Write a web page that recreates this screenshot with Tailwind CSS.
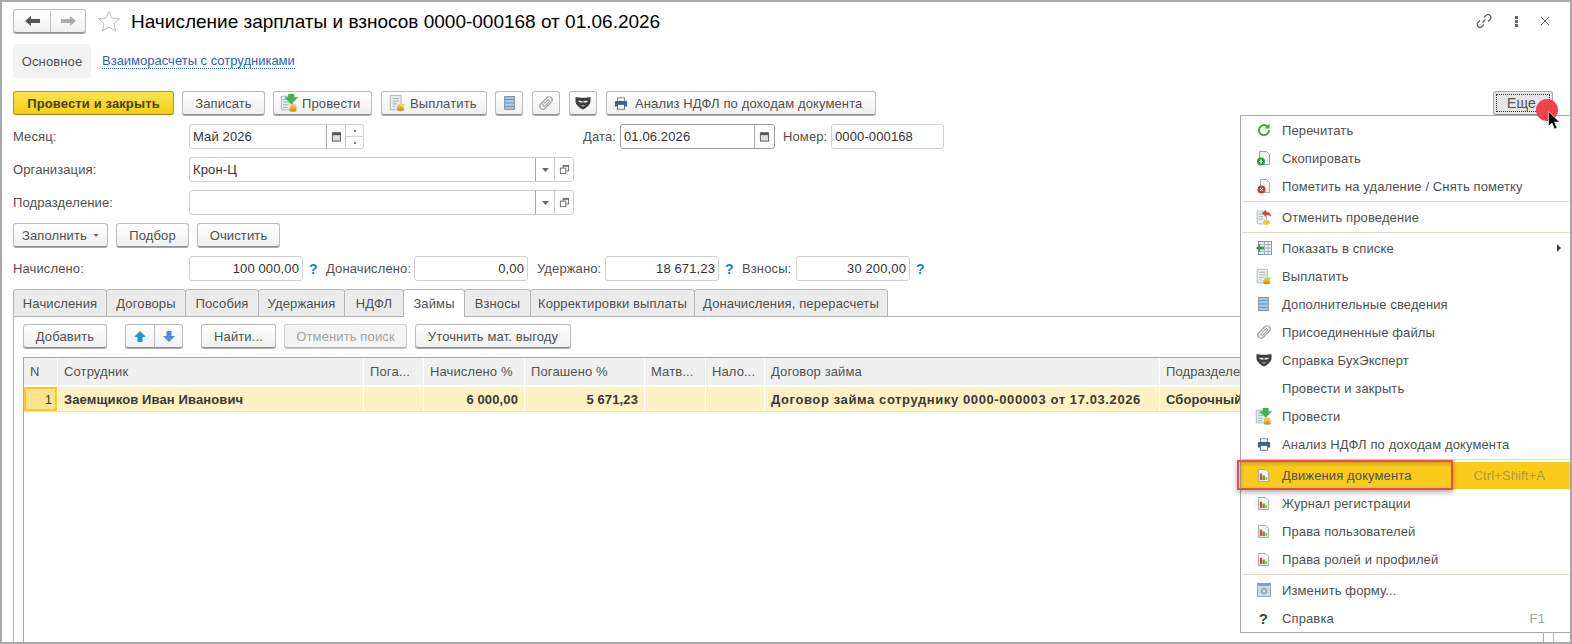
<!DOCTYPE html>
<html lang="ru">

<head>
  <meta charset="UTF-8">
  <title>Начисление зарплаты и взносов</title>
  <script src="https://cdn.jsdelivr.net/npm/@tailwindcss/browser@4"></script>
</head>

<body class="bg-white">

  <!-- Shared icons -->
  <svg width="0" height="0" class="absolute">
    <defs>
      <symbol id="i-cal" viewBox="0 0 12 12">
        <rect x="1.5" y="2" width="9" height="9" fill="#ddd" stroke="#555"/>
        <rect x="1.5" y="2" width="9" height="2.5" fill="#555"/>
        <path d="M3.5 1v2M8.500 1v2" stroke="#555"/>
      </symbol>
      <symbol id="i-open" viewBox="0 0 12 12">
        <rect x="4.500" y="1.500" width="6" height="6" fill="#fff" stroke="#666"/>
        <path d="M4.500 1.500h6v1.500h-6z" fill="#666"/>
        <rect x="1.500" y="4.500" width="6" height="6" fill="#fff" stroke="#666"/>
      </symbol>
      <symbol id="i-post" viewBox="0 0 20 20">
        <path d="M1.500 2.500h12v15h-12z" fill="#e8eef4" stroke="#9fb0c0"/>
        <path d="M3.500 6h5M3.500 9h6M3.500 12h6M3.500 15h5" stroke="#9aa8b5"/>
        <path d="M9.500 0h6v4h4l-7 7-7-7h4z" fill="#3fb54a" stroke="#2a8f38" stroke-width=".5"/>
        <ellipse cx="14.500" cy="13" rx="4" ry="1.800" fill="#f4cd45"/>
        <ellipse cx="14.500" cy="15.500" rx="4" ry="1.800" fill="#e8b429"/>
        <ellipse cx="14.500" cy="18" rx="4" ry="1.800" fill="#cf9a1e"/>
      </symbol>
      <symbol id="i-pay" viewBox="0 0 20 20">
        <path d="M2.500 1.500h12v16h-12z" fill="#e8eef4" stroke="#9fb0c0"/>
        <path d="M5 5h7M5 8h7M5 11h5M5 14h3" stroke="#9aa8b5"/>
        <ellipse cx="14.500" cy="12.500" rx="4" ry="1.800" fill="#f4cd45"/>
        <ellipse cx="13.500" cy="15" rx="4" ry="1.800" fill="#e8b429"/>
        <ellipse cx="14" cy="17.300" rx="4" ry="1.800" fill="#cf9a1e"/>
      </symbol>
      <symbol id="i-list" viewBox="0 0 12 16">
        <rect x=".5" y=".5" width="11" height="15" fill="#a9c6e0" stroke="#6b8fae"/>
        <path d="M.5 4h11M.5 8h11M.5 12h11" stroke="#6b8fae"/>
      </symbol>
      <symbol id="i-clip" viewBox="0 0 16 16">
        <g transform="rotate(45 8 8)" fill="none" stroke="#a3a3a3">
          <rect x="4.500" y="-.5" width="7" height="17" rx="3.500" stroke-width="1.500"/>
          <rect x="7" y="3" width="2.500" height="9.500" rx="1.250" stroke-width="1.200"/>
        </g>
      </symbol>
      <symbol id="i-mask" viewBox="0 0 16 14">
        <path d="M.5 1c3 1 12 1 15 0v4.500c0 3-4.500 7-7.500 8-3-1-7.500-5-7.500-8z" fill="#3e3e3e"/>
        <path d="M3 5c2-.5 3.500-.5 5 .8 1.500-1.300 3-1.300 5-.8-1 1.500-3.500 2-5 1-1.500 1-4 .5-5-1z" fill="#fff"/>
        <path d="M5.500 9h5L8 11z" fill="#999"/>
      </symbol>
      <symbol id="i-print" viewBox="0 0 16 14">
        <rect x="4" y="0.500" width="8" height="4" fill="#fff" stroke="#5d7f9f"/>
        <path d="M1 5.500q0-1.500 1.500-1.500h11q1.500 0 1.500 1.500v5h-14z" fill="#38658f"/>
        <rect x="4" y="8" width="8" height="5.500" fill="#fff" stroke="#38658f"/>
      </symbol>
      <symbol id="i-chart" viewBox="0 0 14 16">
        <path d="M1.500 1.500h8l3 3v10h-11z" fill="#f6f6f6" stroke="#9aa4ad"/>
        <rect x="3" y="6" width="2.500" height="7" fill="#d9433b"/>
        <rect x="6" y="8" width="2.500" height="5" fill="#3fa648"/>
        <rect x="9" y="9.500" width="2" height="3.500" fill="#e3a72b"/>
      </symbol>
    </defs>
  </svg>

  <div class="relative w-[1572px] h-[644px] overflow-hidden border-2 border-[#a9a9a9] bg-white pl-[11px] pt-[7px] flex flex-col font-['Liberation_Sans',Arial,sans-serif] text-[13px] leading-none tracking-[0.12px] text-[#505050]">

    <!-- Title bar -->
    <div class="h-[24px] flex items-center shrink-0">
      <div class="w-[73px] h-[24px] flex rounded-[3px] border border-[#bbb] border-b-[#8f8f8f] shadow-[0_1px_0_#aaa] bg-linear-to-b from-white to-[#f0f0f0]">
        <div class="w-[37px] flex items-center justify-center border-r border-[#c4c4c4]">
          <svg width="15" height="10" viewBox="0 0 15 10"><path d="M0 5l6-5v3h9v4H6v3z" fill="#555"/></svg>
        </div>
        <div class="flex-1 flex items-center justify-center">
          <svg width="15" height="10" viewBox="0 0 15 10"><path d="M15 5L9 0v3H0v4h9v3z" fill="#adadad"/></svg>
        </div>
      </div>
      <svg class="ml-[11px]" width="24" height="24" viewBox="0 0 24 24"><path d="M12 2l3 7 7.500.7-5.600 5 1.700 7.300L12 18.200 5.400 22l1.700-7.300-5.600-5L9 9z" fill="#fff" stroke="#bdbdbd"/></svg>
      <h1 class="ml-[10px] text-[19px] tracking-normal text-black font-normal whitespace-nowrap">Начисление зарплаты и взносов 0000-000168 от 01.06.2026</h1>
      <div class="ml-auto flex items-center pr-[20px]">
        <svg width="18" height="18" viewBox="0 0 18 18" fill="none" stroke="#666" stroke-width="1.200"><path d="M7.500 10.500l3-3"/><path d="M9 5.500l2-2a2.800 2.800 0 0 1 4 4l-2 2"/><path d="M9 12.500l-2 2a2.800 2.800 0 0 1-4-4l2-2"/></svg>
        <div class="ml-[22px] flex flex-col gap-[1px]">
          <span class="w-[3px] h-[3px] bg-[#666]"></span>
          <span class="w-[3px] h-[3px] bg-[#666]"></span>
          <span class="w-[3px] h-[3px] bg-[#666]"></span>
        </div>
        <svg class="ml-[22px]" width="10" height="10" viewBox="0 0 10 10" stroke="#666"><path d="M1 1l8 8M9 1l-8 8"/></svg>
      </div>
    </div>

    <!-- Form sections -->
    <div class="mt-[11px] h-[34px] flex items-center shrink-0">
      <div class="w-[78px] h-[34px] rounded-[3px] bg-[#f2f2f2] flex items-center justify-center">Основное</div>
      <a href="#" class="ml-[11px] tracking-normal text-[#2a5fbf] border-b border-dotted border-[#2a5fbf] pb-[1px]">Взаиморасчеты с сотрудниками</a>
    </div>

    <!-- Command bar -->
    <div class="mt-[13px] h-[24px] flex shrink-0">
      <button class="w-[161px] h-[24px] rounded-[3px] border border-[#b39b22] border-b-[#9c861a] bg-linear-to-b from-[#fbe44c] to-[#f5cf00] font-bold text-[#4a4000]">Провести и закрыть</button>
      <button class="ml-[8px] w-[83px] h-[24px] rounded-[3px] border border-[#bbb] border-b-[#8f8f8f] shadow-[0_1px_0_#aaa] bg-linear-to-b from-white to-[#f0f0f0]">Записать</button>
      <button class="ml-[8px] w-[99px] h-[24px] rounded-[3px] border border-[#bbb] border-b-[#8f8f8f] shadow-[0_1px_0_#aaa] bg-linear-to-b from-white to-[#f0f0f0] flex items-center pl-[6px]">
        <svg width="18" height="18"><use href="#i-post"/></svg><span class="ml-[4px]">Провести</span>
      </button>
      <button class="ml-[9px] w-[106px] h-[24px] rounded-[3px] border border-[#bbb] border-b-[#8f8f8f] shadow-[0_1px_0_#aaa] bg-linear-to-b from-white to-[#f0f0f0] flex items-center pl-[6px]">
        <svg width="18" height="18"><use href="#i-pay"/></svg><span class="ml-[4px]">Выплатить</span>
      </button>
      <button class="ml-[8px] w-[28px] h-[24px] rounded-[3px] border border-[#bbb] border-b-[#8f8f8f] shadow-[0_1px_0_#aaa] bg-linear-to-b from-white to-[#f0f0f0] flex items-center justify-center">
        <svg width="11" height="14"><use href="#i-list"/></svg>
      </button>
      <button class="ml-[9px] w-[28px] h-[24px] rounded-[3px] border border-[#bbb] border-b-[#8f8f8f] shadow-[0_1px_0_#aaa] bg-linear-to-b from-white to-[#f0f0f0] flex items-center justify-center">
        <svg width="14" height="14"><use href="#i-clip"/></svg>
      </button>
      <button class="ml-[9px] w-[28px] h-[24px] rounded-[3px] border border-[#bbb] border-b-[#8f8f8f] shadow-[0_1px_0_#aaa] bg-linear-to-b from-white to-[#f0f0f0] flex items-center justify-center">
        <svg width="16" height="14"><use href="#i-mask"/></svg>
      </button>
      <button class="ml-[9px] w-[270px] h-[24px] rounded-[3px] border border-[#bbb] border-b-[#8f8f8f] shadow-[0_1px_0_#aaa] bg-linear-to-b from-white to-[#f0f0f0] flex items-center pl-[7px]">
        <svg width="14" height="13"><use href="#i-print"/></svg><span class="ml-[7px]">Анализ НДФЛ по доходам документа</span>
      </button>
    </div>

    <!-- Month, date, number -->
    <div class="mt-[9px] h-[25px] flex items-center shrink-0">
      <span class="w-[176px]">Месяц:</span>
      <div class="w-[175px] h-[25px] flex rounded-[3px] border border-[#d0d0d0]">
        <span class="w-[136px] flex items-center pl-[3px] text-[#333]">Май 2026</span>
        <span class="w-[19px] flex items-center justify-center border-l border-[#a9a9a9]"><svg width="11" height="11"><use href="#i-cal"/></svg></span>
        <span class="flex-1 flex flex-col border-l border-[#c9c9c9]">
          <span class="flex-1 flex items-center justify-center border-b border-[#d0d0d0]"><span class="w-[2px] h-[2px] bg-[#777]"></span></span>
          <span class="flex-1 flex items-center justify-center"><span class="w-[2px] h-[2px] bg-[#777]"></span></span>
        </span>
      </div>
      <span class="ml-[219px] w-[37px]">Дата:</span>
      <div class="w-[155px] h-[25px] flex rounded-[3px] border border-[#9a9a9a]">
        <span class="flex-1 flex items-center pl-[3px] text-[#333]">01.06.2026</span>
        <span class="w-[20px] flex items-center justify-center border-l border-[#a9a9a9]"><svg width="11" height="11"><use href="#i-cal"/></svg></span>
      </div>
      <span class="ml-[8px] w-[48px]">Номер:</span>
      <div class="w-[113px] h-[25px] flex items-center pl-[3px] rounded-[3px] border border-[#d0d0d0] text-[#333]">0000-000168</div>
    </div>

    <!-- Organisation -->
    <div class="mt-[8px] h-[25px] flex items-center shrink-0">
      <span class="w-[176px]">Организация:</span>
      <div class="w-[385px] h-[25px] flex rounded-[3px] border border-[#d0d0d0]">
        <span class="flex-1 flex items-center pl-[3px] text-[#333]">Крон-Ц</span>
        <span class="w-[19px] flex items-center justify-center border-l border-[#a9a9a9]"><svg width="7" height="4" viewBox="0 0 7 4"><path d="M0 0h7L3.500 4z" fill="#666"/></svg></span>
        <span class="w-[19px] flex items-center justify-center border-l border-[#c9c9c9]"><svg width="11" height="11"><use href="#i-open"/></svg></span>
      </div>
    </div>

    <!-- Department -->
    <div class="mt-[8px] h-[25px] flex items-center shrink-0">
      <span class="w-[176px]">Подразделение:</span>
      <div class="w-[385px] h-[25px] flex rounded-[3px] border border-[#d0d0d0]">
        <span class="flex-1"></span>
        <span class="w-[19px] flex items-center justify-center border-l border-[#a9a9a9]"><svg width="7" height="4" viewBox="0 0 7 4"><path d="M0 0h7L3.500 4z" fill="#666"/></svg></span>
        <span class="w-[19px] flex items-center justify-center border-l border-[#c9c9c9]"><svg width="11" height="11"><use href="#i-open"/></svg></span>
      </div>
    </div>

    <!-- Fill buttons -->
    <div class="mt-[8px] h-[24px] flex shrink-0">
      <button class="w-[95px] h-[24px] rounded-[3px] border border-[#bbb] border-b-[#8f8f8f] shadow-[0_1px_0_#aaa] bg-linear-to-b from-white to-[#f0f0f0] flex items-center justify-center gap-[6px]">Заполнить<svg width="6" height="3" viewBox="0 0 7 4"><path d="M0 0h7L3.500 4z" fill="#666"/></svg></button>
      <button class="ml-[8px] w-[73px] h-[24px] rounded-[3px] border border-[#bbb] border-b-[#8f8f8f] shadow-[0_1px_0_#aaa] bg-linear-to-b from-white to-[#f0f0f0]">Подбор</button>
      <button class="ml-[8px] w-[83px] h-[24px] rounded-[3px] border border-[#bbb] border-b-[#8f8f8f] shadow-[0_1px_0_#aaa] bg-linear-to-b from-white to-[#f0f0f0]">Очистить</button>
    </div>

    <!-- Totals -->
    <div class="mt-[9px] h-[25px] flex items-center shrink-0">
      <span class="w-[176px]">Начислено:</span>
      <div class="w-[114px] h-[25px] flex items-center justify-end pr-[3px] rounded-[3px] border border-[#d0d0d0] text-[#333]">100 000,00</div>
      <span class="w-[23px] pl-[6px] font-bold text-[14px] text-[#1a7fc4]">?</span>
      <span class="w-[88px]">Доначислено:</span>
      <div class="w-[114px] h-[25px] flex items-center justify-end pr-[3px] rounded-[3px] border border-[#d0d0d0] text-[#333]">0,00</div>
      <span class="ml-[9px] w-[68px]">Удержано:</span>
      <div class="w-[114px] h-[25px] flex items-center justify-end pr-[3px] rounded-[3px] border border-[#d0d0d0] text-[#333]">18 671,23</div>
      <span class="w-[23px] pl-[6px] font-bold text-[14px] text-[#1a7fc4]">?</span>
      <span class="w-[54px]">Взносы:</span>
      <div class="w-[114px] h-[25px] flex items-center justify-end pr-[3px] rounded-[3px] border border-[#d0d0d0] text-[#333]">30 200,00</div>
      <span class="pl-[6px] font-bold text-[14px] text-[#1a7fc4]">?</span>
    </div>

    <!-- Tabs -->
    <div class="mt-[8px] h-[27px] flex shrink-0 relative z-10">
      <div class="w-[94px] h-[28px] flex items-center justify-center bg-[#ebebeb] border border-[#b5b5b5] rounded-t-[3px]">Начисления</div>
      <div class="w-[80px] h-[28px] -ml-px flex items-center justify-center bg-[#ebebeb] border border-[#b5b5b5] rounded-t-[3px]">Договоры</div>
      <div class="w-[74px] h-[28px] -ml-px flex items-center justify-center bg-[#ebebeb] border border-[#b5b5b5] rounded-t-[3px]">Пособия</div>
      <div class="w-[87px] h-[28px] -ml-px flex items-center justify-center bg-[#ebebeb] border border-[#b5b5b5] rounded-t-[3px]">Удержания</div>
      <div class="w-[60px] h-[28px] -ml-px flex items-center justify-center bg-[#ebebeb] border border-[#b5b5b5] rounded-t-[3px]">НДФЛ</div>
      <div class="w-[62px] h-[28px] -ml-px flex items-center justify-center bg-white border border-b-0 border-[#b5b5b5] rounded-t-[3px]">Займы</div>
      <div class="w-[67px] h-[28px] -ml-px flex items-center justify-center bg-[#ebebeb] border border-[#b5b5b5] rounded-t-[3px]">Взносы</div>
      <div class="w-[165px] h-[28px] -ml-px flex items-center justify-center bg-[#ebebeb] border border-[#b5b5b5] rounded-t-[3px]">Корректировки выплаты</div>
      <div class="w-[194px] h-[28px] -ml-px flex items-center justify-center bg-[#ebebeb] border border-[#b5b5b5] rounded-t-[3px]">Доначисления, перерасчеты</div>
    </div>

    <!-- Tab page -->
    <div class="w-[1541px] flex-1 border border-b-0 border-[#b5b5b5] pl-[9px] pr-[9px] pt-[7px] flex flex-col min-h-0">
      <div class="h-[24px] flex shrink-0">
        <button class="w-[84px] h-[24px] rounded-[3px] border border-[#bbb] border-b-[#8f8f8f] shadow-[0_1px_0_#aaa] bg-linear-to-b from-white to-[#f0f0f0]">Добавить</button>
        <div class="ml-[18px] w-[58px] h-[24px] flex rounded-[3px] border border-[#bbb] border-b-[#8f8f8f] shadow-[0_1px_0_#aaa] bg-linear-to-b from-white to-[#f0f0f0]">
          <span class="w-[29px] flex items-center justify-center border-r border-[#bbb]"><svg width="12" height="11" viewBox="0 0 12 11"><path d="M6 0l6 6H8.500v5h-5V6H0z" fill="#2b8fd6"/></svg></span>
          <span class="flex-1 flex items-center justify-center"><svg width="12" height="11" viewBox="0 0 12 11"><path d="M6 11l6-6H8.500V0h-5v5H0z" fill="#4d8fcf"/></svg></span>
        </div>
        <button class="ml-[18px] w-[75px] h-[24px] rounded-[3px] border border-[#bbb] border-b-[#8f8f8f] shadow-[0_1px_0_#aaa] bg-linear-to-b from-white to-[#f0f0f0]">Найти...</button>
        <button class="ml-[8px] w-[123px] h-[24px] rounded-[3px] border border-[#d0d0d0] border-b-[#b5b5b5] shadow-[0_1px_0_#ccc] bg-[#f4f4f4] text-[#a3a3a3]">Отменить поиск</button>
        <button class="ml-[8px] w-[156px] h-[24px] rounded-[3px] border border-[#bbb] border-b-[#8f8f8f] shadow-[0_1px_0_#aaa] bg-linear-to-b from-white to-[#f0f0f0]">Уточнить мат. выгоду</button>
      </div>

      <!-- Loans table -->
      <div class="mt-[9px] flex-1 border-x border-t border-[#a9a9a9]">
        <div class="h-[27px] grid grid-cols-[33px_305px_59px_100px_119px_60px_58px_394px_1fr] gap-x-px">
          <div class="bg-[#f0f0f0] flex items-center pl-[6px]">N</div>
          <div class="bg-[#f0f0f0] flex items-center pl-[6px]">Сотрудник</div>
          <div class="bg-[#f0f0f0] flex items-center pl-[6px]">Пога...</div>
          <div class="bg-[#f0f0f0] flex items-center pl-[6px]">Начислено %</div>
          <div class="bg-[#f0f0f0] flex items-center pl-[6px]">Погашено %</div>
          <div class="bg-[#f0f0f0] flex items-center pl-[6px]">Матв...</div>
          <div class="bg-[#f0f0f0] flex items-center pl-[6px]">Нало...</div>
          <div class="bg-[#f0f0f0] flex items-center pl-[6px]">Договор займа</div>
          <div class="bg-[#f0f0f0] flex items-center pl-[6px]">Подразделение</div>
        </div>
        <div class="mt-[2px] h-[25px] border-b border-[#e2e2e2] grid grid-cols-[33px_305px_59px_100px_119px_60px_58px_394px_1fr] gap-x-px font-bold text-[#3a3a3a]">
          <div class="bg-[#fde38f] border-2 border-[#f9c91f] flex items-center justify-end pr-[3px] font-normal">1</div>
          <div class="bg-[#fef1c2] flex items-center pl-[6px]">Заемщиков Иван Иванович</div>
          <div class="bg-[#fef1c2]"></div>
          <div class="bg-[#fef1c2] flex items-center justify-end pr-[6px]">6 000,00</div>
          <div class="bg-[#fef1c2] flex items-center justify-end pr-[6px]">5 671,23</div>
          <div class="bg-[#fef1c2]"></div>
          <div class="bg-[#fef1c2]"></div>
          <div class="bg-[#fef1c2] flex items-center pl-[6px] whitespace-nowrap tracking-[0.6px]">Договор займа сотруднику 0000-000003 от 17.03.2026</div>
          <div class="bg-[#fef1c2] flex items-center pl-[6px]">Сборочный цех</div>
        </div>
      </div>
    </div>

    <!-- Еще button -->
    <div class="absolute left-[1491px] top-[89px] w-[60px] h-[24px] rounded-[3px] border border-[#aaa] border-b-[#8a8a8a] bg-[#e6e6e6] p-[2px]">
      <div class="w-full h-full border border-dotted border-[#333] flex items-center pl-[10px] text-[14px]">Еще</div>
    </div>

    <!-- Popup menu -->
    <div class="absolute left-[1238px] top-[113px] right-0 h-[518px] bg-white border-l border-y border-[#a9a9a9] flex flex-col">
      <div class="h-[28px] flex items-center shrink-0">
        <span class="w-[41px] flex justify-center pl-[4px]"><svg width="14" height="14" viewBox="0 0 14 14" fill="none"><path d="M12 7a5 5 0 1 1-1.500-3.500" stroke="#45a845" stroke-width="2"/><path d="M12.500 .5v5h-5z" fill="#45a845"/></svg></span>Перечитать
      </div>
      <div class="h-[28px] flex items-center shrink-0">
        <span class="w-[41px] flex justify-center pl-[4px]"><svg width="16" height="16" viewBox="0 0 16 16"><path d="M3.500 1.500h7l3 3v10h-10z" fill="#f0f2f4" stroke="#8fa3b5"/><circle cx="5" cy="11.500" r="4" fill="#2c9e45"/><path d="M3 11.500h4M5 9.500v4" stroke="#fff" stroke-width="1.200"/></svg></span>Скопировать
      </div>
      <div class="h-[28px] flex items-center shrink-0">
        <span class="w-[41px] flex justify-center pl-[4px]"><svg width="16" height="16" viewBox="0 0 16 16"><path d="M4.500 1.500h6l3 3v10h-9z" fill="#f0f2f4" stroke="#9fb0c0"/><circle cx="5.500" cy="11.500" r="4" fill="#d8323a"/><path d="M4 10l3 3M7 10l-3 3" stroke="#fff"/></svg></span>Пометить на удаление / Снять пометку
      </div>
      <div class="h-[3px] shrink-0 ml-[1px] flex items-center"><div class="w-full h-px bg-[#dcd8ca]"></div></div>
      <div class="h-[28px] flex items-center shrink-0">
        <span class="w-[41px] flex justify-center pl-[4px]"><svg width="17" height="17" viewBox="0 0 20 20"><path d="M2.500 2.500h11v15h-11z" fill="#e8eef4" stroke="#9fb0c0"/><path d="M4.500 6h6M4.500 9h5M4.500 12h5" stroke="#9aa8b5"/><path d="M8 5l5-4v2.500c4 0 6 2 6 6-1.500-2-3-2.500-6-2.500V9.500z" fill="#d9433b"/><ellipse cx="13.500" cy="15.500" rx="4" ry="3" fill="#f1c534"/></svg></span>Отменить проведение
      </div>
      <div class="h-[3px] shrink-0 ml-[1px] flex items-center"><div class="w-full h-px bg-[#dcd8ca]"></div></div>
      <div class="h-[28px] flex items-center shrink-0 relative">
        <span class="w-[41px] flex justify-center pl-[4px]"><svg width="16" height="14" viewBox="0 0 16 14"><rect x="2.500" y=".5" width="13" height="13" fill="#f2f6fa" stroke="#7f97ae"/><path d="M2.500 3.500h13M8.500 .5v13M12 .5v13M2.500 7h13M2.500 10.500h13" stroke="#9db0c2"/><path d="M0 7l4-3.500v2h4v3H4v2z" fill="#2c9e45"/></svg></span>Показать в списке
        <svg class="absolute right-[9px] top-[10px]" width="4" height="8" viewBox="0 0 4 8"><path d="M0 0l4 4-4 4z" fill="#444"/></svg>
      </div>
      <div class="h-[28px] flex items-center shrink-0">
        <span class="w-[41px] flex justify-center pl-[4px]"><svg width="17" height="17"><use href="#i-pay"/></svg></span>Выплатить
      </div>
      <div class="h-[28px] flex items-center shrink-0">
        <span class="w-[41px] flex justify-center pl-[4px]"><svg width="11" height="14"><use href="#i-list"/></svg></span>Дополнительные сведения
      </div>
      <div class="h-[28px] flex items-center shrink-0">
        <span class="w-[41px] flex justify-center pl-[4px]"><svg width="14" height="14"><use href="#i-clip"/></svg></span>Присоединенные файлы
      </div>
      <div class="h-[28px] flex items-center shrink-0">
        <span class="w-[41px] flex justify-center pl-[4px]"><svg width="16" height="14"><use href="#i-mask"/></svg></span>Справка БухЭксперт
      </div>
      <div class="h-[28px] flex items-center shrink-0">
        <span class="w-[41px]"></span>Провести и закрыть
      </div>
      <div class="h-[28px] flex items-center shrink-0">
        <span class="w-[41px] flex justify-center pl-[4px]"><svg width="17" height="17"><use href="#i-post"/></svg></span>Провести
      </div>
      <div class="h-[28px] flex items-center shrink-0">
        <span class="w-[41px] flex justify-center pl-[4px]"><svg width="14" height="13"><use href="#i-print"/></svg></span>Анализ НДФЛ по доходам документа
      </div>
      <div class="h-[4px] shrink-0 ml-[1px] flex items-start pt-px"><div class="w-full h-px bg-[#dcd8ca]"></div></div>
      <div class="h-[27px] flex items-center shrink-0 bg-[#f9cc1c] relative">
        <span class="w-[41px] flex justify-center pl-[4px]"><svg width="13" height="15"><use href="#i-chart"/></svg></span>Движения документа
        <span class="absolute right-[25px] text-[#ad9752]">Ctrl+Shift+A</span>
      </div>
      <div class="h-[28px] flex items-center shrink-0">
        <span class="w-[41px] flex justify-center pl-[4px]"><svg width="13" height="15"><use href="#i-chart"/></svg></span>Журнал регистрации
      </div>
      <div class="h-[28px] flex items-center shrink-0">
        <span class="w-[41px] flex justify-center pl-[4px]"><svg width="13" height="15"><use href="#i-chart"/></svg></span>Права пользователей
      </div>
      <div class="h-[28px] flex items-center shrink-0">
        <span class="w-[41px] flex justify-center pl-[4px]"><svg width="13" height="15"><use href="#i-chart"/></svg></span>Права ролей и профилей
      </div>
      <div class="h-[3px] shrink-0 ml-[1px] flex items-center"><div class="w-full h-px bg-[#dcd8ca]"></div></div>
      <div class="h-[28px] flex items-center shrink-0">
        <span class="w-[41px] flex justify-center pl-[4px]"><svg width="14" height="14" viewBox="0 0 14 14"><rect x=".5" y=".5" width="13" height="13" fill="#d5dbe1" stroke="#8ea3b6"/><rect x=".5" y=".5" width="13" height="2.500" fill="#6fa5d8"/><circle cx="7" cy="8" r="3.500" fill="#a5adb5"/><circle cx="7" cy="8" r="1.200" fill="#e6e9ec"/></svg></span>Изменить форму...
      </div>
      <div class="h-[28px] flex items-center shrink-0 relative">
        <span class="w-[41px] flex justify-center pl-[4px] font-bold text-[15px] text-[#444]">?</span>Справка
        <span class="absolute right-[25px] text-[#a5a5a5]">F1</span>
      </div>
    </div>

    <!-- Red frame over the menu row -->
    <div class="absolute left-[1235px] top-[458px] w-[216px] h-[30px] border-2 border-[#f4474b] shadow-[0_2px_5px_rgba(0,0,0,0.35),inset_2px_2px_4px_rgba(0,0,0,0.2)]"></div>

    <!-- Click marker and cursor -->
    <div class="absolute left-[1534px] top-[97px] w-[22px] h-[22px] rounded-full bg-[#f4414a]"></div>
    <svg class="absolute left-[1546px] top-[109px]" width="12" height="19" viewBox="0 0 12 19"><path d="M.5.5v15l3.500-3.500 2.500 6 2.500-1-2.500-6h5z" fill="#000" stroke="#fff" stroke-width=".6"/></svg>
  </div>

</body>

</html>
